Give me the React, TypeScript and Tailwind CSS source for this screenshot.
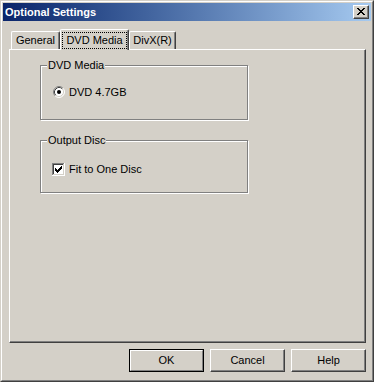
import type { ReactNode } from 'react'

/**
 * Optional Settings -- classic Win2000 style dialog
 *
 * Title bar, three tabs (General / DVD Media / DivX(R)), DVD Media page with
 * two group boxes, and the OK / Cancel / Help row.
 */

// ---------------------------------------------------------------------------
// Bevel classes
// ---------------------------------------------------------------------------

const raised =
  'border border-t-white border-l-white border-r-[#404040] border-b-[#404040] shadow-[inset_-1px_-1px_0_#808080]'

const etched = 'border border-[#808080] shadow-[1px_1px_0_#ffffff,inset_1px_1px_0_#ffffff]'

const FONT = "font-['Liberation_Sans',Arial,sans-serif]"

// ---------------------------------------------------------------------------
// Small pieces
// ---------------------------------------------------------------------------

function CloseGlyph(): ReactNode {
  // 8x7 pixel X, 2px strokes
  return (
    <svg width="16" height="14" viewBox="0 0 16 14" shapeRendering="crispEdges">
      <path
        fill="#000"
        d="M4 3h2v1H4zM10 3h2v1h-2zM5 4h2v1H5zM9 4h2v1H9zM6 5h4v1H6zM7 6h2v1H7zM6 7h4v1H6zM5 8h2v1H5zM9 8h2v1H9zM4 9h2v1H4zM10 9h2v1h-2z"
      />
    </svg>
  )
}

function Radio({ checked }: { checked: boolean }): ReactNode {
  return (
    <svg width="12" height="12" viewBox="0 0 12 12" className="shrink-0">
      <circle cx="6" cy="6" r="5" fill="#fff" />
      <path d="M2.11 9.89 A5.5 5.5 0 0 1 9.89 2.11" fill="none" stroke="#808080" />
      <path d="M9.89 2.11 A5.5 5.5 0 0 1 2.11 9.89" fill="none" stroke="#fff" />
      <path d="M2.82 9.18 A4.5 4.5 0 0 1 9.18 2.82" fill="none" stroke="#404040" />
      <path d="M9.18 2.82 A4.5 4.5 0 0 1 2.82 9.18" fill="none" stroke="#d4d0c8" />
      {checked && <circle cx="6" cy="6" r="2" fill="#000" />}
    </svg>
  )
}

function Checkbox({ checked }: { checked: boolean }): ReactNode {
  return (
    <svg width="13" height="13" viewBox="0 0 13 13" shapeRendering="crispEdges" className="shrink-0">
      <rect x="0" y="0" width="13" height="13" fill="#fff" />
      <path fill="#808080" d="M0 0h12v1H0zM0 1h1v11H0z" />
      <path fill="#404040" d="M1 1h10v1H1zM1 2h1v9H1z" />
      <path fill="#d4d0c8" d="M1 11h11v1H1zM11 1h1v10h-1z" />
      {checked && (
        <path
          fill="#000"
          d="M3 5h1v3H3zM4 6h1v3H4zM5 7h1v3H5zM6 6h1v3H6zM7 5h1v3H7zM8 4h1v3H8zM9 3h1v3H9z"
        />
      )}
    </svg>
  )
}

function GroupBox({
  label,
  height,
  children,
}: {
  label: string
  height: string
  children: ReactNode
}): ReactNode {
  return (
    <div className={`relative w-[208px] ${height} ${etched}`}>
      <span className="absolute -top-[7px] left-[6px] bg-[#d4d0c8] px-[1px] leading-[13px]">
        {label}
      </span>
      {children}
    </div>
  )
}

function Tab({ label, selected }: { label: string; selected?: boolean }): ReactNode {
  if (selected) {
    return (
      <div className="relative z-10 -mb-px flex h-[21px] w-[69px] items-start rounded-t-[2px] border-l border-t border-r border-t-white border-l-white border-r-[#404040] bg-[#d4d0c8] pt-[2px] pl-px shadow-[inset_-1px_0_0_#808080]">
        <div className="flex h-[17px] w-[65px] items-center justify-center border border-dotted border-black leading-[13px]">
          {label}
        </div>
      </div>
    )
  }
  return (
    <div className="flex h-[18px] w-full items-center justify-center rounded-t-[2px] border-l border-t border-r border-t-white border-l-white border-r-[#404040] leading-[13px] shadow-[inset_-1px_0_0_#808080]">
      {label}
    </div>
  )
}

function Button({ label, isDefault }: { label: string; isDefault?: boolean }): ReactNode {
  if (isDefault) {
    return (
      <div className="h-[23px] w-[75px] border border-black">
        <div className="flex h-full items-center justify-center border border-t-white border-l-white border-r-[#808080] border-b-[#808080]">
          {label}
        </div>
      </div>
    )
  }
  return (
    <div className={`flex h-[23px] w-[75px] items-center justify-center ${raised}`}>{label}</div>
  )
}

// ---------------------------------------------------------------------------
// Dialog
// ---------------------------------------------------------------------------

export default function App(): ReactNode {
  return (
    <div
      className={`h-[382px] w-[374px] border border-t-[#d4d0c8] border-l-[#d4d0c8] border-r-[#404040] border-b-[#404040] bg-[#d4d0c8] text-[11px] text-black ${FONT}`}
    >
      <div className="flex h-full flex-col border border-t-white border-l-white border-r-[#808080] border-b-[#808080] p-px">
        {/* Title bar */}
        <div className="flex h-[18px] items-center bg-linear-to-r from-[#0a246a] to-[#a6caf0] pr-[2px] pl-[2px]">
          <span className="font-bold text-white">Optional Settings</span>
          <div className={`ml-auto h-[14px] w-[16px] bg-[#d4d0c8] ${raised}`}>
            <div className="-mt-px -ml-px">
              <CloseGlyph />
            </div>
          </div>
        </div>

        {/* Tabs */}
        <div className="mt-[8px] ml-[6px] flex h-[20px] items-end pl-[2px]">
          <div className="w-[49px]">
            <Tab label="General" />
          </div>
          <Tab label="DVD Media" selected />
          <div className="w-[47px]">
            <Tab label="DivX(R)" />
          </div>
        </div>

        {/* Page */}
        <div className="ml-[6px] h-[294px] w-[357px] border border-t-white border-l-white border-r-[#404040] border-b-[#404040] shadow-[inset_-1px_-1px_0_#808080]">
          <div className="flex flex-col gap-[20px] pt-[15px] pl-[30px]">
            <GroupBox label="DVD Media" height="h-[55px]">
              <div className="flex items-center gap-[4px] pt-[20px] pl-[12px] leading-[12px]">
                <Radio checked />
                <span>DVD 4.7GB</span>
              </div>
            </GroupBox>

            <GroupBox label="Output Disc" height="h-[53px]">
              <div className="flex items-center gap-[4px] pt-[22px] pl-[11px] leading-[13px]">
                <Checkbox checked />
                <span>Fit to One Disc</span>
              </div>
            </GroupBox>
          </div>
        </div>

        {/* Buttons */}
        <div className="mt-[6px] flex justify-end gap-[6px] pr-[5px]">
          <Button label="OK" isDefault />
          <Button label="Cancel" />
          <Button label="Help" />
        </div>
      </div>
    </div>
  )
}
